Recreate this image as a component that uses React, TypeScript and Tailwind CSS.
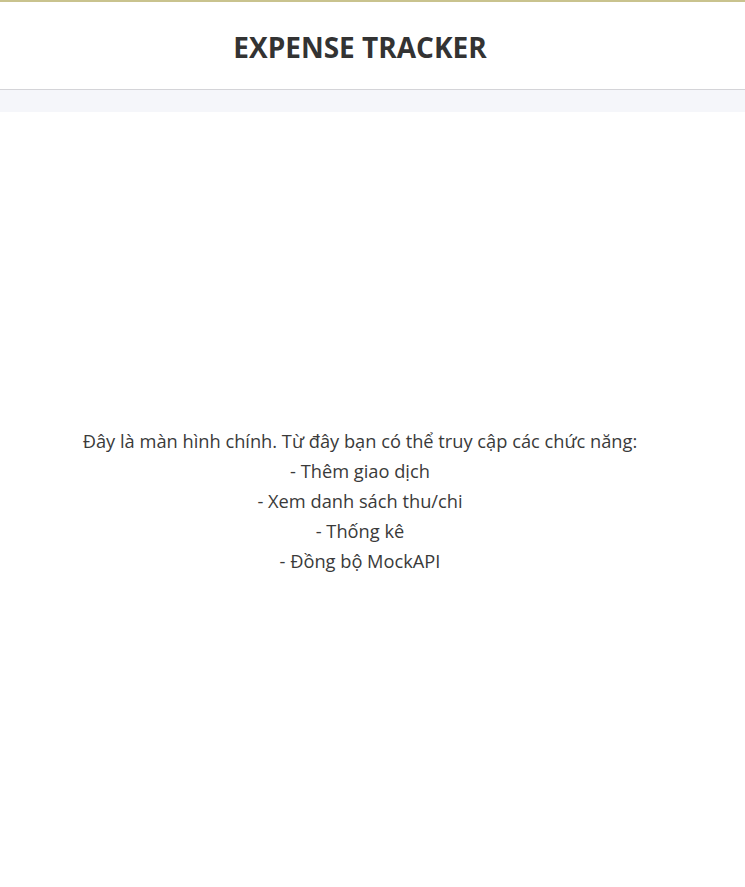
export default function App() {
  const features = ['Thêm giao dịch', 'Xem danh sách thu/chi', 'Thống kê', 'Đồng bộ MockAPI'];

  return (
    <div className="h-[887px] flex flex-col bg-white font-['Open_Sans','Noto_Sans',sans-serif] text-[#333]">
      <header className="border-t-2 border-[#c9c38e] border-b border-b-[#d4d4d8] bg-white">
        <div className="w-[720px] h-[87px] flex items-center justify-center pt-[3px]">
          <h1 className="text-[28px] font-bold text-[#333]">EXPENSE TRACKER</h1>
        </div>
      </header>
      <div className="h-[22px] bg-[#f5f6fa]" />

      <main className="flex-1 flex items-center">
        <div className="w-[720px] pt-[2px] text-center text-[18.25px] leading-[30px] text-[#3a3a3a]">
          <p>Đây là màn hình chính. Từ đây bạn có thể truy cập các chức năng:</p>
          {features.map((f) => (
            <p key={f}>- {f}</p>
          ))}
        </div>
      </main>
    </div>
  );
}
